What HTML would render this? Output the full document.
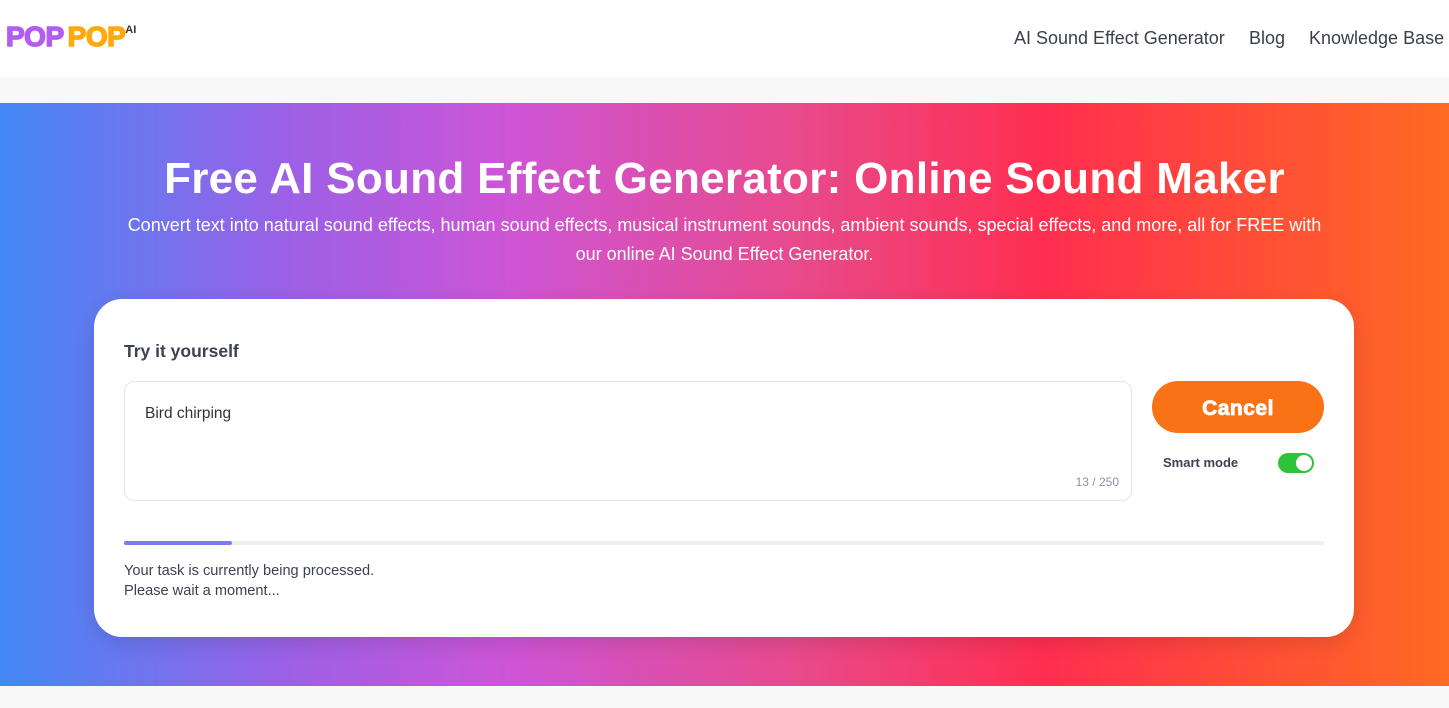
<!DOCTYPE html>
<html><head><meta charset="utf-8">
<style>
*{margin:0;padding:0;box-sizing:border-box}
body{width:1449px;height:708px;overflow:hidden;background:#f8f8f8;font-family:"Liberation Sans",sans-serif;position:relative}
.hdr{position:absolute;left:0;top:0;width:1449px;height:77px;background:#fff}
.logo{position:absolute;left:6px;top:21px;font-family:"Liberation Sans",sans-serif;font-weight:900;font-size:28px;letter-spacing:-0.5px;-webkit-text-stroke:1.5px currentColor}
.logo .a{color:#b35cf0}
.logo .b{color:#ffa90e;margin-left:4px}
.logo sup{font-size:11px;color:#333;vertical-align:top;position:relative;top:3px;letter-spacing:0;-webkit-text-stroke:0;font-weight:700}
.nav{position:absolute;top:28px;font-size:18px;color:#3a3f4a}
.hero{position:absolute;left:0;top:103px;width:1449px;height:583px;background:linear-gradient(90deg,#4388f6 0%,#9c60e6 20%,#cd55d6 35%,#e84a8c 55%,#ff2e50 72%,#ff4a3a 85%,#ff6a22 100%)}
h1{position:absolute;top:154px;left:0;width:1449px;text-align:center;color:#fff;font-size:44px;font-weight:700;letter-spacing:0.3px}
.sub{position:absolute;top:211px;left:0;width:1449px;text-align:center;color:#fff;font-size:18px;line-height:29px;letter-spacing:0}
.card{position:absolute;left:94px;top:299px;width:1260px;height:338px;background:#fff;border-radius:28px;box-shadow:0 6px 20px rgba(0,0,0,.12)}
.try{position:absolute;left:30px;top:42px;font-size:17.5px;font-weight:700;color:#3b4252}
.ta{position:absolute;left:30px;top:82px;width:1008px;height:120px;border:1px solid #e2e4e8;border-radius:10px}
.ta .t{position:absolute;left:20px;top:23px;font-size:15.5px;color:#333}
.ta .c{position:absolute;right:12px;bottom:11px;font-size:12px;color:#8a93a3}
.btn{position:absolute;left:1058px;top:82px;width:172px;height:52px;border-radius:26px;background:#f97216;color:#fff;font-weight:900;font-size:21px;text-align:center;line-height:56px;-webkit-text-stroke:0.8px #fff;letter-spacing:0.5px}
.sm{position:absolute;left:1069px;top:156px;font-size:13px;font-weight:700;color:#3b4252}
.tg{position:absolute;left:1184px;top:154px;width:36px;height:20px;border-radius:10px;background:#2fc23a}
.tg::after{content:"";position:absolute;right:2px;top:2px;width:16px;height:16px;border-radius:50%;background:#fff}
.bar{position:absolute;left:30px;top:242px;width:1200px;height:4px;background:#eeeff2;border-radius:2px}
.bar i{position:absolute;left:0;top:0;width:108px;height:4px;background:#7a7af2;border-radius:2px}
.msg{position:absolute;left:30px;top:262px;font-size:14.6px;line-height:20px;color:#3b4252}
</style></head><body>
<div class="hdr">
<div class="logo"><span class="a">POP</span><span class="b">POP</span><sup>AI</sup></div>
<div class="nav" style="left:1014px">AI Sound Effect Generator</div>
<div class="nav" style="left:1249px">Blog</div>
<div class="nav" style="left:1309px">Knowledge Base</div>
</div>
<div class="hero"></div>
<h1>Free AI Sound Effect Generator: Online Sound Maker</h1>
<div class="sub">Convert text into natural sound effects, human sound effects, musical instrument sounds, ambient sounds, special effects, and more, all for FREE with<br>our online AI Sound Effect Generator.</div>
<div class="card">
<div class="try">Try it yourself</div>
<div class="ta"><div class="t">Bird chirping</div><div class="c">13 / 250</div></div>
<div class="btn">Cancel</div>
<div class="sm">Smart mode</div>
<div class="tg"></div>
<div class="bar"><i></i></div>
<div class="msg">Your task is currently being processed.<br>Please wait a moment...</div>
</div>
</body></html>
